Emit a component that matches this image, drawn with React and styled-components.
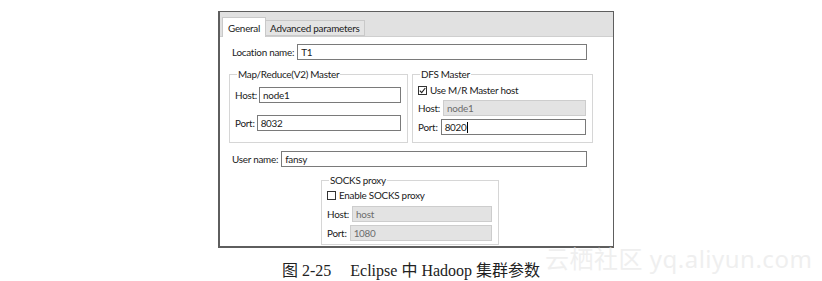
import React from 'react';
import styled, { createGlobalStyle } from 'styled-components';

const GlobalStyle = createGlobalStyle`
  html, body {
    margin: 0;
    padding: 0;
    background: #ffffff;
  }
  body {
    font-family: Lato, "Noto Sans", sans-serif;
  }
`;

const Page = styled.div`
  position: relative;
  width: 822px;
  height: 281px;
  overflow: hidden;
  display: flex;
  flex-direction: column;
`;

const Window = styled.div`
  box-sizing: border-box;
  margin: 11px 0 0 218px;
  width: 396px;
  height: 242px;
  border: 2px solid #5e5e5e;
  border-right-width: 1px;
  border-top-width: 1px;
  background: #fff;
  display: flex;
  flex-direction: column;
  font-size: 9.9px;
  line-height: 14px;
  letter-spacing: -0.25px;
  color: #1a1a1a;
`;

const TabBar = styled.div`
  height: 25px;
  flex: none;
  background: #e1e1e1;
  border-bottom: 1px solid #cfcfcf;
  display: flex;
  align-items: flex-end;
  padding-left: 2px;
  box-sizing: border-box;
`;

const Tab = styled.div`
  box-sizing: border-box;
  height: ${p => (p.active ? '20px' : '16px')};
  margin-bottom: ${p => (p.active ? '-1px' : '0')};
  padding: 0 ${p => (p.active ? '5px' : '4px')};
  display: flex;
  align-items: center;
  background: ${p => (p.active ? '#fff' : '#e4e4e4')};
  border: 1px solid #c9c9c9;
  border-bottom: ${p => (p.active ? 'none' : '1px solid #c9c9c9')};
  border-left: ${p => (p.active ? '1px solid #c9c9c9' : 'none')};
`;

const Content = styled.div`
  padding: 7px 26px 0 9px;
  display: flex;
  flex-direction: column;
`;

const Row = styled.div`
  display: flex;
  align-items: center;
  gap: ${p => p.gap || 3}px;
  margin-top: ${p => p.mt || 0}px;
  padding-left: ${p => p.indent || 0}px;
`;

const Label = styled.span`
  white-space: nowrap;
`;

const Input = styled.div`
  box-sizing: border-box;
  flex: 1;
  height: 16px;
  border: 1px solid ${p => (p.disabled ? '#cdcdcd' : '#7a7a7a')};
  background: ${p => (p.disabled ? '#e3e3e3' : '#fff')};
  color: ${p => (p.disabled ? '#6c6c6c' : '#1a1a1a')};
  padding-left: 3px;
  display: flex;
  align-items: center;
`;

const Caret = styled.span`
  display: inline-block;
  width: 1px;
  height: 11px;
  background: #000;
`;

const Groups = styled.div`
  display: grid;
  grid-template-columns: 179px 181px;
  gap: 4px;
  margin-top: 7px;
`;

const Group = styled.fieldset`
  box-sizing: border-box;
  margin: 0;
  border: 1px solid #d6d6d6;
  padding: 0 6px ${p => p.pb ?? 7}px 5px;
  min-width: 0;
  width: ${p => (p.w ? `${p.w}px` : 'auto')};
  display: flex;
  flex-direction: column;
`;

const Legend = styled.legend`
  padding: 0 1px;
  margin-left: 2px;
  line-height: 14px;
  color: #1a1a1a;
`;

const Check = styled.span`
  box-sizing: border-box;
  width: 9px;
  height: 9px;
  border: 1px solid #333;
  display: inline-flex;
  align-items: center;
  justify-content: center;
  background: #fff;
`;

const CheckRow = styled.label`
  display: flex;
  align-items: center;
  gap: 3px;
  height: 14px;
  margin-top: ${p => p.mt || 0}px;
`;

const SocksWrap = styled.div`
  display: flex;
  padding-left: 92px;
  margin-top: 6px;
`;

const Caption = styled.div`
  margin-top: 9px;
  text-align: center;
  font-family: "Liberation Serif", "Noto Sans CJK SC", serif;
  font-size: 16px;
  color: #222;
`;

const Num = styled.span`
  margin-right: 19px;
`;

const Watermark = styled.div`
  position: absolute;
  left: 545px;
  top: 240px;
  font-family: "Noto Sans", "Noto Sans CJK SC", sans-serif;
  font-size: 24px;
  color: #efefef;
  letter-spacing: 0.5px;
  white-space: nowrap;
`;

const Tick = () => (
  <svg width="7" height="7" viewBox="0 0 7 7">
    <path d="M0.8 3.6 L2.7 5.6 L6.3 1" fill="none" stroke="#222" strokeWidth="1.1" />
  </svg>
);

export default function App() {
  return (
    <Page>
      <GlobalStyle />
      <Window>
        <TabBar>
          <Tab active>General</Tab>
          <Tab>Advanced parameters</Tab>
        </TabBar>
        <Content>
          <Row indent={3}>
            <Label>Location name:</Label>
            <Input>T1</Input>
          </Row>
          <Groups>
            <Group>
              <Legend>Map/Reduce(V2) Master</Legend>
              <Row mt={6} gap={2}>
                <Label>Host:</Label>
                <Input>node1</Input>
              </Row>
              <Row mt={12} gap={2}>
                <Label>Port:</Label>
                <Input>8032</Input>
              </Row>
            </Group>
            <Group>
              <Legend>DFS Master</Legend>
              <CheckRow mt={2}>
                <Check><Tick /></Check>
                Use M/R Master host
              </CheckRow>
              <Row mt={3} gap={3}>
                <Label>Host:</Label>
                <Input disabled>node1</Input>
              </Row>
              <Row mt={3} gap={3}>
                <Label>Port:</Label>
                <Input>8020<Caret /></Input>
              </Row>
            </Group>
          </Groups>
          <Row indent={3} mt={8}>
            <Label>User name:</Label>
            <Input>fansy</Input>
          </Row>
          <SocksWrap>
            <Group w={178} pb={3}>
              <Legend>SOCKS proxy</Legend>
              <CheckRow mt={1}>
                <Check />
                Enable SOCKS proxy
              </CheckRow>
              <Row mt={4} gap={3}>
                <Label>Host:</Label>
                <Input disabled>host</Input>
              </Row>
              <Row mt={3} gap={3}>
                <Label>Port:</Label>
                <Input disabled>1080</Input>
              </Row>
            </Group>
          </SocksWrap>
        </Content>
      </Window>
      <Caption>
        <Num>图 2-25</Num>Eclipse 中 Hadoop 集群参数
      </Caption>
      <Watermark>云栖社区 yq.aliyun.com</Watermark>
    </Page>
  );
}
